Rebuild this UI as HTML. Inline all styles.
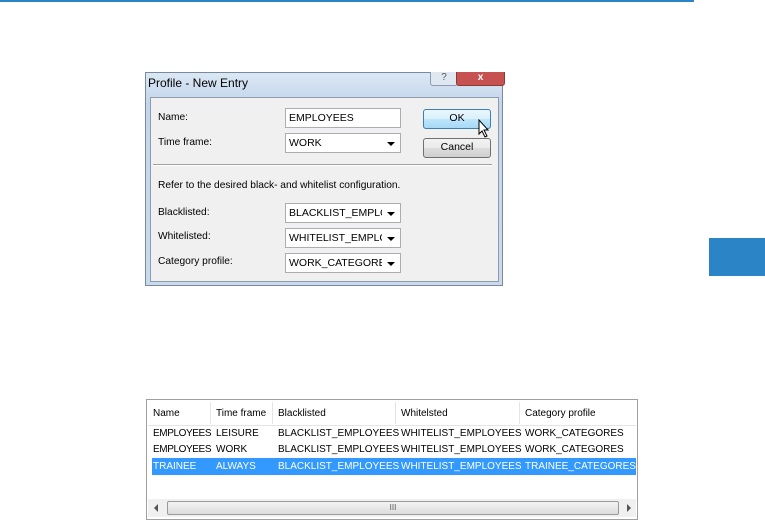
<!DOCTYPE html>
<html><head><style>
body{margin:0;width:765px;height:520px;background:#fff;position:relative;overflow:hidden;font-family:"Liberation Sans",sans-serif;font-size:10.2px;color:#000}
.a{position:absolute;white-space:nowrap}
.box{position:absolute;background:#fff;border:1px solid #abadb3;box-sizing:border-box;padding:3px 0 0 3px;font-size:10.5px;overflow:hidden;white-space:nowrap}
.arr{position:absolute;right:0;top:0;width:18px;height:18px;background:#fff}
.arr:after{content:"";position:absolute;left:5px;top:8px;border-left:4px solid transparent;border-right:4px solid transparent;border-top:4px solid #000}
.btn{position:absolute;border:1px solid #707070;border-radius:3px;box-sizing:border-box;text-align:center;line-height:17px;font-size:10.5px;background:linear-gradient(#f2f2f2,#ebebeb 50%,#dddddd 51%,#cfcfcf)}
.t{font-size:10px}
</style></head><body>
<div class="a" style="left:0;top:0;width:694px;height:2px;background:#2a84c6"></div>
<div class="a" style="left:709px;top:238px;width:56px;height:38px;background:#2a84c6"></div>

<div class="a" style="left:145px;top:72px;width:358px;height:214px;background:linear-gradient(#dbe7f4,#c4d6ec 30px,#c9daee);border:1px solid #7a8a9c;box-sizing:border-box"></div>
<div class="a" style="left:148px;top:76px;font-size:12px;color:#000">Profile - New Entry</div>
<div class="a" style="left:430px;top:72px;width:26px;height:13px;border:1px solid #8c9bb0;border-top:none;border-radius:0 0 3px 3px;background:#dfe7f1;text-align:center;font-size:10px;line-height:12px;color:#556">?</div>
<div class="a" style="left:456px;top:72px;width:47px;height:13px;border:1px solid #8a3a34;border-top:none;border-radius:0 0 3px 3px;background:#c75050;text-align:center;font-size:10px;line-height:12px;color:#fff;font-weight:bold">x</div>
<div class="a" style="left:150px;top:97px;width:349px;height:185px;background:#f0f0f0;border:1px solid #8d9bab;box-sizing:border-box"></div>

<div class="a" style="left:158px;top:112px">Name:</div>
<div class="a" style="left:158px;top:137px">Time frame:</div>
<div class="box" style="left:285px;top:108px;width:116px;height:20px">EMPLOYEES</div>
<div class="box" style="left:285px;top:133px;width:116px;height:20px">WORK<div class="arr"></div></div>
<div class="btn" style="left:423px;top:109px;width:68px;height:20px;border-color:#3c7fb1;background:linear-gradient(#eaf6fd,#d9f0fc 50%,#bee6fd 51%,#a7d9f5)">OK</div>
<div class="btn" style="left:423px;top:138px;width:68px;height:20px">Cancel</div>
<svg class="a" style="left:478px;top:119px" width="12" height="19"><path d="M1 1 L1 15 L4 12 L7 18 L9 17 L6 11 L10 11 Z" fill="#fff" stroke="#000"/></svg>
<div class="a" style="left:153px;top:164px;width:339px;height:1px;background:#a0a0a0;border-bottom:1px solid #fff"></div>
<div class="a" style="left:158px;top:180px">Refer to the desired black- and whitelist configuration.</div>
<div class="a" style="left:158px;top:207px">Blacklisted:</div>
<div class="a" style="left:158px;top:231px">Whitelisted:</div>
<div class="a" style="left:158px;top:256px">Category profile:</div>
<div class="box" style="left:285px;top:203px;width:116px;height:20px">BLACKLIST_EMPLC<div class="arr"></div></div>
<div class="box" style="left:285px;top:228px;width:116px;height:20px">WHITELIST_EMPLC<div class="arr"></div></div>
<div class="box" style="left:285px;top:253px;width:116px;height:20px">WORK_CATEGORE<div class="arr"></div></div>

<div class="a" style="left:146px;top:399px;width:492px;height:121px;border:1px solid #a0a0a0;box-sizing:border-box;background:#fff"></div>
<div class="a" style="left:148px;top:401px;width:488px;height:24px;background:#fff;border-bottom:1px solid #e5e5e5"></div>
<div class="a" style="left:210px;top:402px;width:1px;height:22px;background:#e5e5e5"></div>
<div class="a" style="left:272px;top:402px;width:1px;height:22px;background:#e5e5e5"></div>
<div class="a" style="left:395px;top:402px;width:1px;height:22px;background:#e5e5e5"></div>
<div class="a" style="left:519px;top:402px;width:1px;height:22px;background:#e5e5e5"></div>
<div class="a" style="left:152px;top:458px;width:484px;height:17px;background:#3399ff"></div>
<div class="t">
<div class="a" style="left:153px;top:408px">Name</div>
<div class="a" style="left:216px;top:408px">Time frame</div>
<div class="a" style="left:278px;top:408px">Blacklisted</div>
<div class="a" style="left:401px;top:408px">Whitelsted</div>
<div class="a" style="left:525px;top:408px">Category profile</div>
<div class="a" style="left:153px;top:428px;letter-spacing:-0.4px">EMPLOYEES</div><div class="a" style="left:216px;top:428px">LEISURE</div><div class="a" style="left:278px;top:428px">BLACKLIST_EMPLOYEES</div><div class="a" style="left:401px;top:428px">WHITELIST_EMPLOYEES</div><div class="a" style="left:525px;top:428px">WORK_CATEGORES</div>
<div class="a" style="left:153px;top:444px;letter-spacing:-0.4px">EMPLOYEES</div><div class="a" style="left:216px;top:444px">WORK</div><div class="a" style="left:278px;top:444px">BLACKLIST_EMPLOYEES</div><div class="a" style="left:401px;top:444px">WHITELIST_EMPLOYEES</div><div class="a" style="left:525px;top:444px">WORK_CATEGORES</div>
<div style="color:#fff"><div class="a" style="left:153px;top:461px">TRAINEE</div><div class="a" style="left:216px;top:461px">ALWAYS</div><div class="a" style="left:278px;top:461px">BLACKLIST_EMPLOYEES</div><div class="a" style="left:401px;top:461px">WHITELIST_EMPLOYEES</div><div class="a" style="left:525px;top:461px">TRAINEE_CATEGORES</div></div>
</div>
<div class="a" style="left:148px;top:499px;width:488px;height:18px;background:#f0f0f0"></div>
<div class="a" style="left:167px;top:501px;width:452px;height:14px;border:1px solid #999;border-radius:2px;box-sizing:border-box;background:linear-gradient(#f3f3f3,#dcdcdc);text-align:center;font-size:8px;line-height:12px;color:#555">III</div>
<div class="a" style="left:154px;top:504px;border-top:4px solid transparent;border-bottom:4px solid transparent;border-right:4px solid #555"></div>
<div class="a" style="left:627px;top:504px;border-top:4px solid transparent;border-bottom:4px solid transparent;border-left:4px solid #555"></div>
</body></html>
